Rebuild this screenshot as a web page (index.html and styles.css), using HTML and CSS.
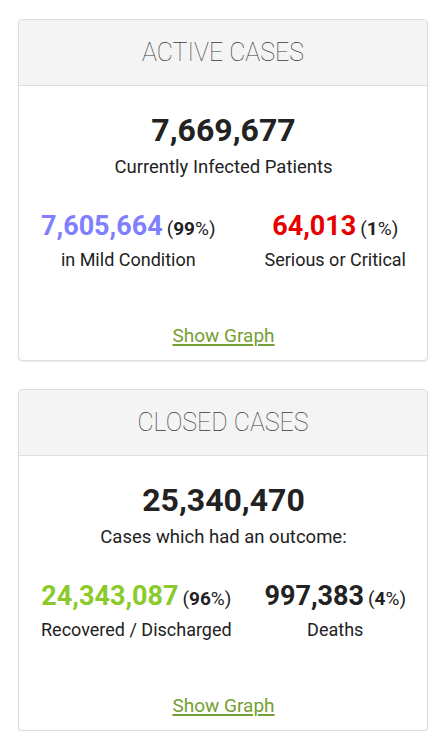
FILE: index.html
```html
<!DOCTYPE html>
<html lang="en">
<head>
<meta charset="utf-8">
<title>Cases</title>
<link rel="stylesheet" href="styles.css">
</head>
<body>
<main class="page">
  <section class="panel">
    <div class="panel-heading">ACTIVE CASES</div>
    <div class="panel-body">
      <div class="big-number">7,669,677</div>
      <div class="caption">Currently Infected Patients</div>
      <div class="split">
        <div class="col">
          <div class="sub-line"><span class="sub-number mild">7,605,664</span> <span class="pct">(<strong>99</strong>%)</span></div>
          <div class="sub-label">in Mild Condition</div>
        </div>
        <div class="col">
          <div class="sub-line"><span class="sub-number critical">64,013</span> <span class="pct">(<strong>1</strong>%)</span></div>
          <div class="sub-label">Serious or Critical</div>
        </div>
      </div>
      <a class="graph-link" href="#">Show Graph</a>
    </div>
  </section>

  <section class="panel">
    <div class="panel-heading">CLOSED CASES</div>
    <div class="panel-body">
      <div class="big-number">25,340,470</div>
      <div class="caption">Cases which had an outcome:</div>
      <div class="split">
        <div class="col">
          <div class="sub-line"><span class="sub-number recovered">24,343,087</span> <span class="pct">(<strong>96</strong>%)</span></div>
          <div class="sub-label">Recovered / Discharged</div>
        </div>
        <div class="col">
          <div class="sub-line"><span class="sub-number deaths">997,383</span> <span class="pct">(<strong>4</strong>%)</span></div>
          <div class="sub-label">Deaths</div>
        </div>
      </div>
      <a class="graph-link" href="#">Show Graph</a>
    </div>
  </section>
</main>
</body>
</html>
```
FILE: styles.css
```css
* { box-sizing: border-box; }
html, body { margin: 0; padding: 0; background: #fff; }
body {
  font-family: Roboto, "Liberation Sans", Arial, sans-serif;
  color: #222;
}
.page {
  display: flex;
  flex-direction: column;
  gap: 28px;
  padding: 19px 15px 0 18px;
}
.panel {
  width: 410px;
  border: 1px solid #dcdcdc;
  border-radius: 4px;
  background: #fff;
  box-shadow: 0 1px 2px rgba(0,0,0,0.08);
  overflow: hidden;
}
.panel-heading {
  height: 66px;
  background: #f4f4f4;
  border-bottom: 1px solid #dddddd;
  display: flex;
  align-items: center;
  justify-content: center;
  font-weight: 100;
  font-size: 25px;
  color: #3a3a3a;
}
.panel-body {
  display: flex;
  flex-direction: column;
  align-items: center;
  padding: 24px 21px 12px 22px;
}
.big-number {
  font-weight: 700;
  font-size: 32px;
  line-height: 40px;
  color: #222;
}
.caption {
  margin-top: 5px;
  font-size: 18.5px;
  line-height: 24px;
  color: #222;
}
.split {
  align-self: stretch;
  display: flex;
  justify-content: space-between;
  margin-top: 29px;
}
.col {
  display: flex;
  flex-direction: column;
  align-items: center;
}
.sub-line {
  line-height: 36px;
  white-space: nowrap;
}
.sub-number {
  font-weight: 700;
  font-size: 27px;
}
.mild { color: #8080ff; }
.critical { color: #e60000; }
.recovered { color: #8aca2b; }
.deaths { color: #222; }
.pct {
  font-size: 19px;
  color: #222;
}
.pct strong { font-weight: 700; }
.sub-label {
  font-size: 18px;
  line-height: 24px;
  color: #222;
}
.graph-link {
  margin-top: 52px;
  font-size: 19px;
  line-height: 24px;
  color: #74a033;
  text-decoration: underline;
  text-decoration-thickness: 1.5px;
  text-underline-offset: 2px;
}
```
